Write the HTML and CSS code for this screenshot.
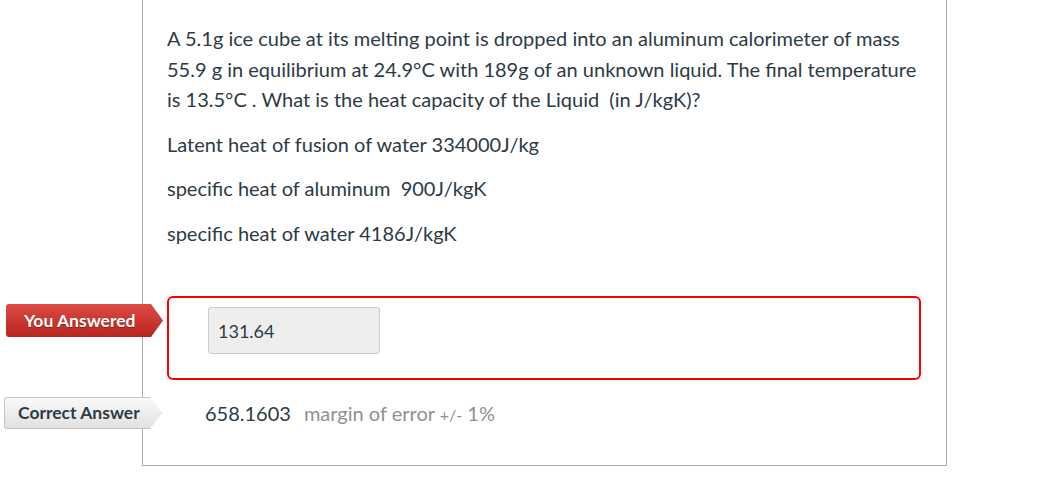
FILE: index.html
```html
<!DOCTYPE html>
<html lang="en">
<head>
  <meta charset="UTF-8">
  <title>Quiz Result</title>
  <link rel="stylesheet" href="styles.css">
</head>
<body>

<!-- Question card -->
<div class="question">
  <div class="question-text">
    <p>A 5.1g ice cube at its melting point is dropped into an aluminum calorimeter of mass 55.9 g in equilibrium at 24.9°C with 189g of an unknown liquid. The final temperature is 13.5°C . What is the heat capacity of the Liquid&nbsp; (in J/kgK)?</p>
    <p>Latent heat of fusion of water 334000J/kg</p>
    <p>specific heat of aluminum&nbsp; 900J/kgK</p>
    <p>specific heat of water 4186J/kgK</p>
  </div>

  <!-- Answers -->
  <div class="answer wrong">
    <span class="flag flag-red">You Answered</span>
    <input type="text" class="answer-input" value="131.64" readonly>
  </div>

  <div class="answer correct">
    <span class="flag flag-grey">Correct Answer</span>
    <span class="answer-value">658.1603</span>
    <span class="margin">margin of error <small>+/-</small> 1%</span>
  </div>
</div>

</body>
</html>
```

FILE: styles.css
```css
/* Basic Styling */
body {
  font-family: Lato, "Open Sans", sans-serif;
  color: #2d3b45;
  margin: 0;
  background: #fff;
}
.question {
  position: relative;
  margin-left: 142px;
  width: 754px;
  border: 1px solid #aaa;
  border-top: none;
  padding: 23px 25px 36px 24px;
}
.question-text p {
  font-size: 20px;
  line-height: 30.5px;
  margin: 0 0 14px 0;
}
.answer {
  position: relative;
}
.answer.wrong {
  margin-top: 48px;
  border: 2px solid #f00;
  border-radius: 6px;
  padding: 9px 0 23px 39px;
  height: 48px;
}
.answer-input {
  box-sizing: border-box;
  width: 172px;
  height: 47px;
  margin: 0;
  padding: 0 9px;
  font-family: Lato, sans-serif;
  font-size: 18px;
  color: #2d3b45;
  background: #eee;
  border: 1px solid #ccc;
  border-radius: 3px;
}
.answer.correct {
  margin-top: 17px;
  height: 32px;
  display: flex;
  align-items: center;
  padding-left: 38px;
  font-size: 20px;
}
.answer-value {
  margin-right: 13px;
}
.margin {
  color: #8b9297;
}
.margin small {
  font-size: 16px;
}

/* Flags to the left of the card */
.flag {
  position: absolute;
  box-sizing: border-box;
  height: 33px;
  line-height: 33px;
  font-size: 17.5px;
  font-weight: bold;
  border-radius: 3px 0 0 3px;
  clip-path: polygon(0 0, calc(100% - 12px) 0, 100% 50%, calc(100% - 12px) 100%, 0 100%);
}
.flag-red {
  left: -163px;
  top: 6px;
  width: 157px;
  padding-left: 18px;
  color: #fff;
  background: linear-gradient(#dd4b45, #b8241e);
  text-shadow: 0 1px 1px rgba(0, 0, 0, 0.3);
}
.flag-grey {
  left: -163px;
  top: 0;
  width: 158px;
  height: 32px;
  line-height: 32px;
  padding-left: 14px;
  color: #2d3b45;
  background: linear-gradient(#fafafa, #e0e0e0);
  box-shadow: inset 0 0 0 1px #c4c4c4;
}
```
